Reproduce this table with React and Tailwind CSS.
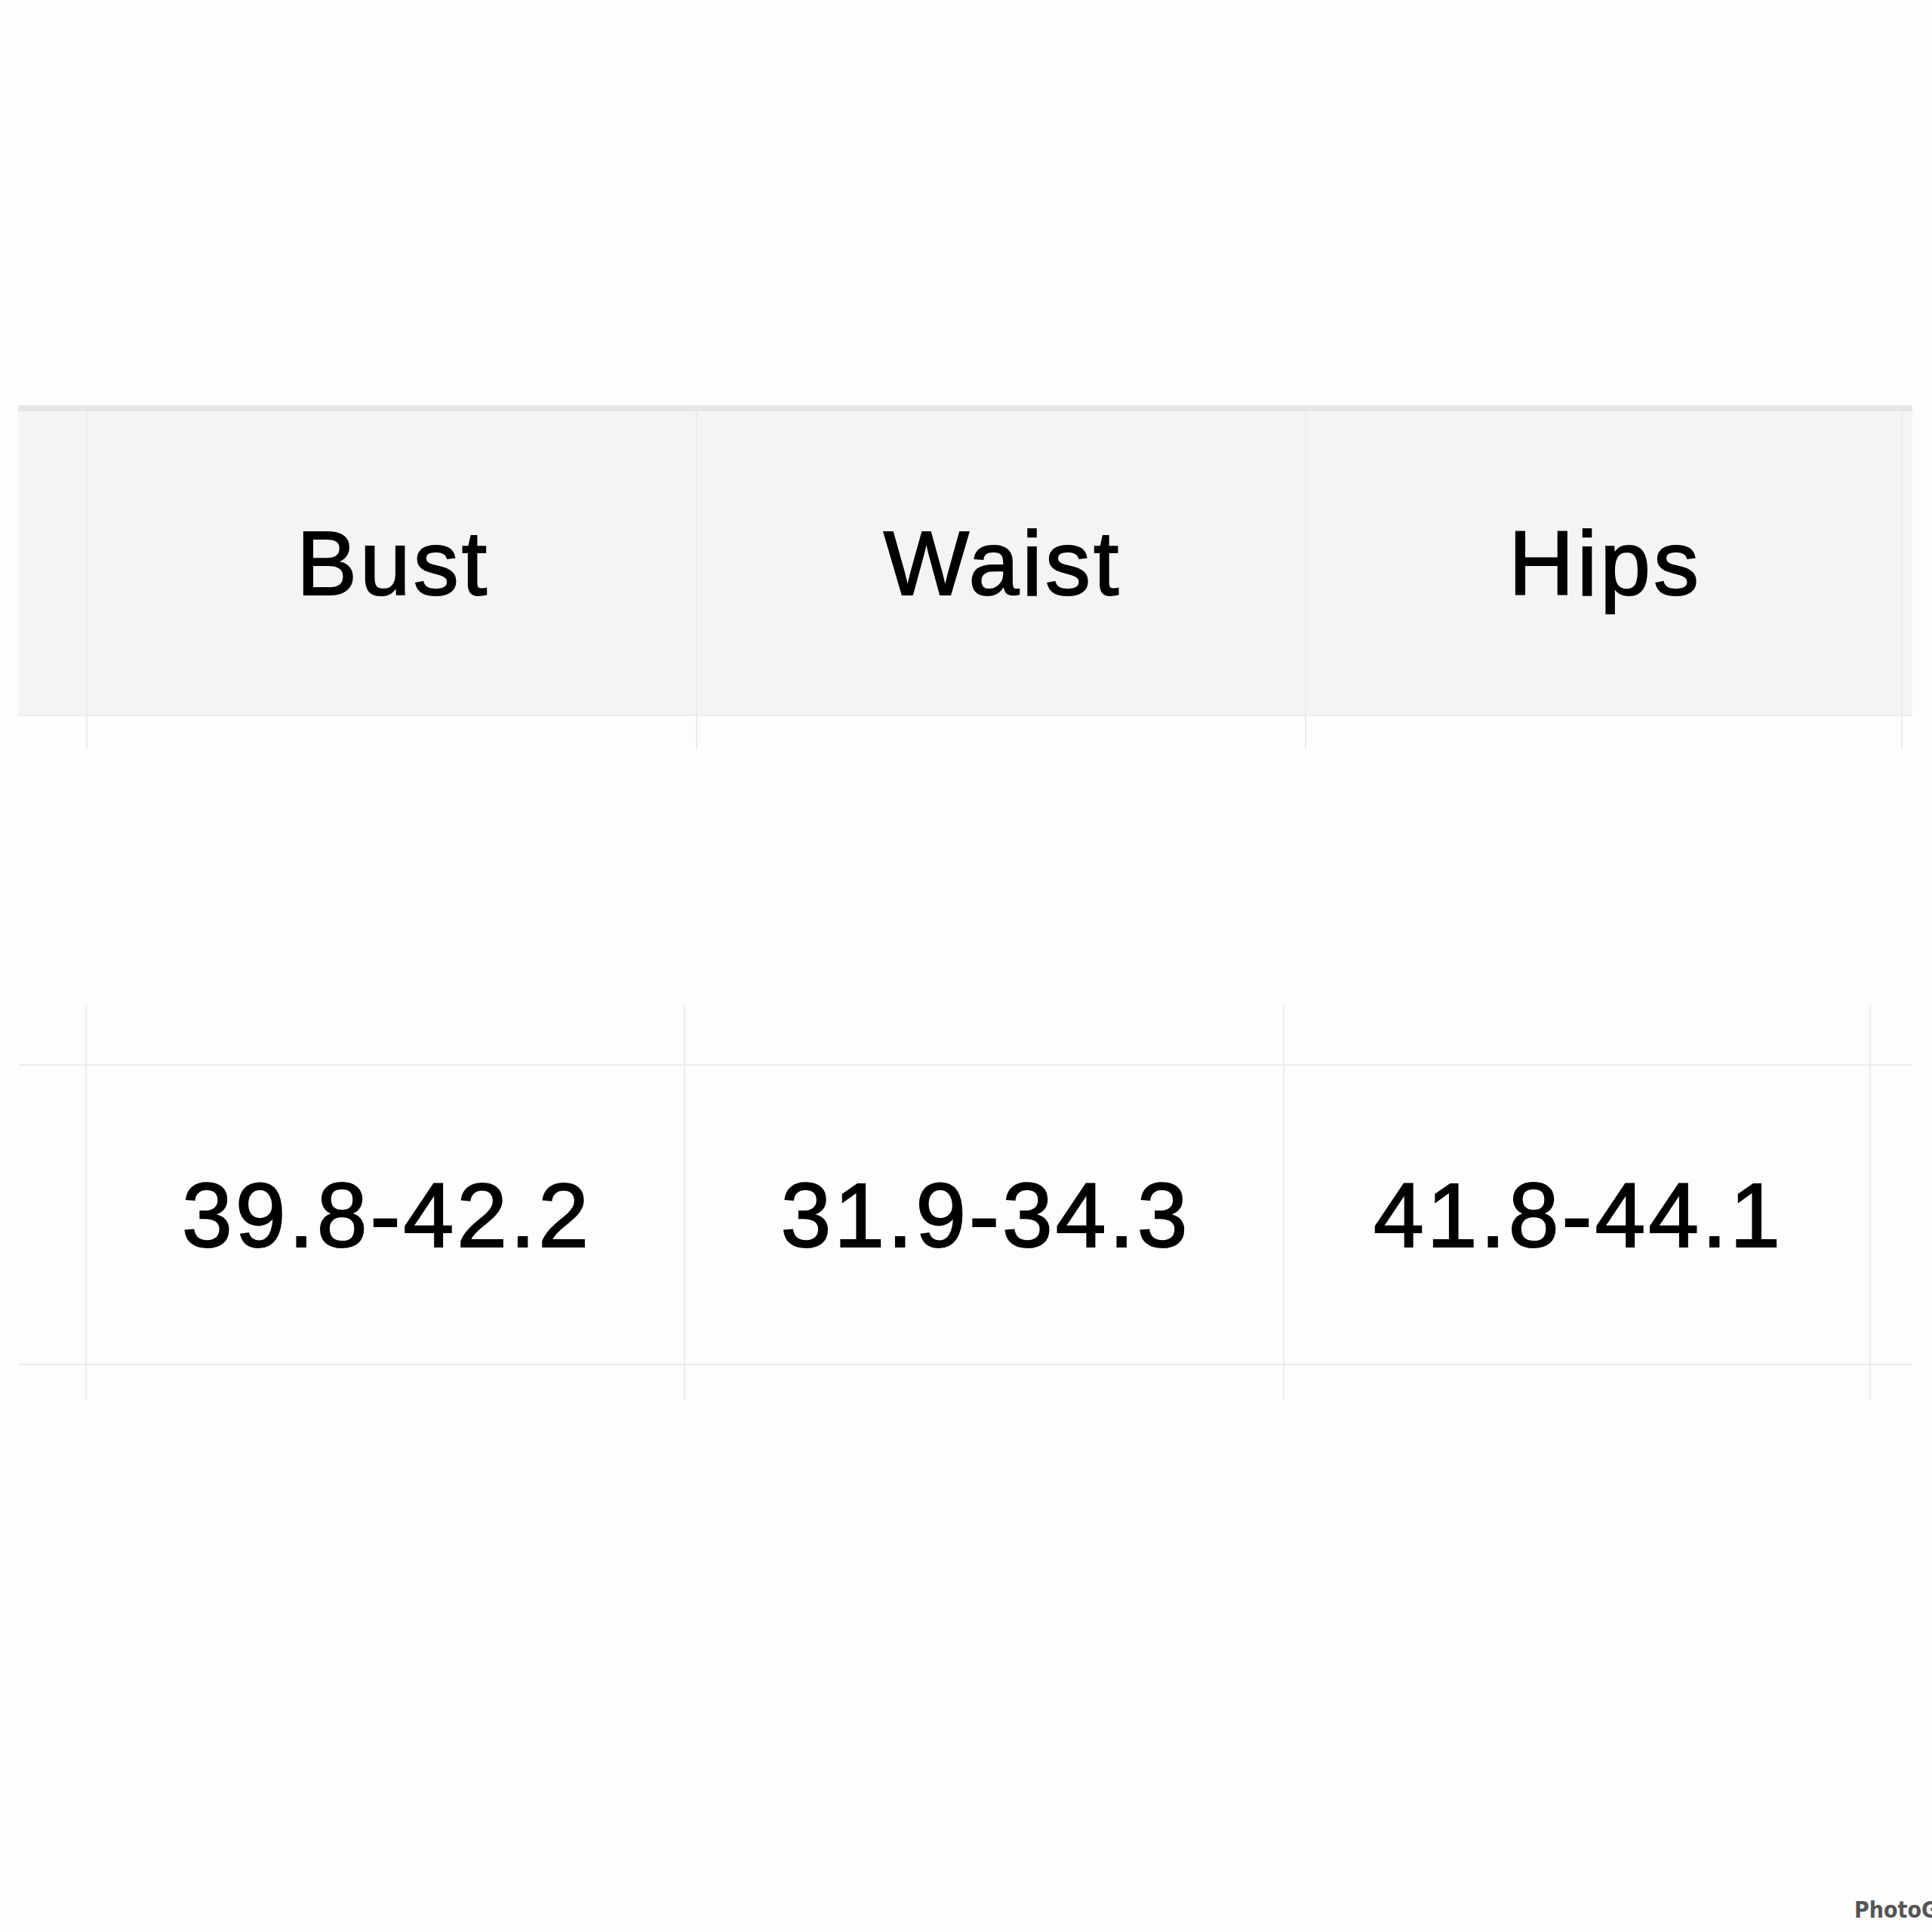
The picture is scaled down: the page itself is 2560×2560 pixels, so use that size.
import React from "react";

const headCols = "grid grid-cols-[90px_808px_807px_790px_15px]";
const rowCols = "grid grid-cols-[89px_793px_794px_777px_57px]";

function Lines({ cols, height }) {
  // vertical rule stubs that run past the table edges
  return (
    <div className={`${cols} ${height}`}>
      <div />
      <div className="border-l-2 border-[#ececec]" />
      <div className="border-l-2 border-[#ececec]" />
      <div className="border-l-2 border-[#ececec]" />
      <div className="border-l-2 border-[#ececec]" />
    </div>
  );
}

export default function App() {
  const headers = ["Bust", "Waist", "Hips"];
  const values = ["39.8-42.2", "31.9-34.3", "41.8-44.1"];

  return (
    <div className="relative w-[2560px] h-[2560px] overflow-hidden bg-[#fdfdfd] text-black font-['Liberation_Sans',Arial,sans-serif] flex flex-col">
      {/* Header row */}
      <div className="mt-[537px] ml-[24px] w-[2510px] border-t-[8px] border-[#e6e6e6]">
        <div className={`${headCols} h-[404px] bg-[#f4f4f4] border-b-2 border-[#ececec]`}>
          <div />
          {headers.map((h) => (
            <div
              key={h}
              className="border-l-2 border-[#ececec] flex items-center justify-center text-[120px] leading-none tracking-[4px] pl-[4px] [-webkit-text-stroke:2px_#000]"
            >
              {h}
            </div>
          ))}
          <div className="border-l-2 border-[#ececec]" />
        </div>
        <Lines cols={headCols} height="h-[44px]" />
      </div>

      {/* Value row */}
      <div className="mt-[339px] ml-[24px] w-[2510px]">
        <Lines cols={rowCols} height="h-[78px]" />
        <div className={`${rowCols} h-[399px] border-y-2 border-[#ececec]`}>
          <div />
          {values.map((v) => (
            <div
              key={v}
              className="border-l-2 border-[#ececec] flex items-center justify-center text-[120px] leading-none tracking-[4px] pl-[4px] [-webkit-text-stroke:2px_#000]"
            >
              {v}
            </div>
          ))}
          <div className="border-l-2 border-[#ececec]" />
        </div>
        <Lines cols={rowCols} height="h-[47px]" />
      </div>

      {/* Watermark, cut by the right edge as in the photo */}
      <div className="mt-auto mb-[14px] ml-[2457px] whitespace-nowrap text-[30px] leading-none font-bold text-[#555] font-['DejaVu_Sans_Condensed','DejaVu_Sans',sans-serif]">
        PhotoGrid
      </div>
    </div>
  );
}
